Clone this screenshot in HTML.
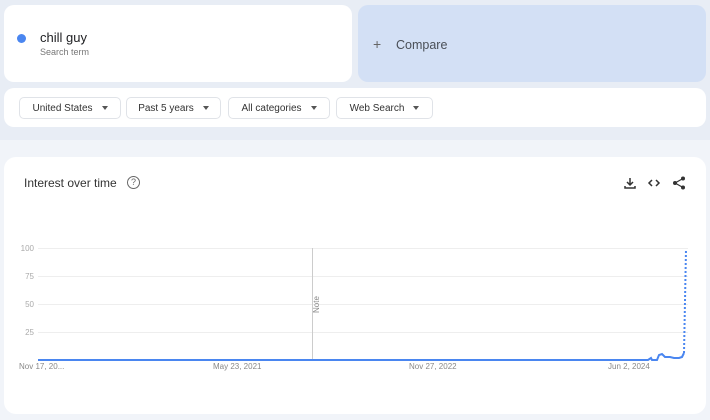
<!DOCTYPE html>
<html><head><style>
*{margin:0;padding:0;box-sizing:border-box}
body{width:710px;height:420px;background:#f1f4f9;font-family:"Liberation Sans",sans-serif;position:relative;overflow:hidden}
.top{position:absolute;left:0;top:0;width:710px;height:140px;background:#e8edf5}
.card{position:absolute;background:#fff;border-radius:10px}
.btn{position:absolute;top:97px;height:22px;border:1px solid #e0e3e8;border-radius:5px;font-size:10px;color:#333;display:flex;align-items:center;justify-content:center;background:#fff}
.btn i{display:inline-block;margin-left:9px;border-left:3.5px solid transparent;border-right:3.5px solid transparent;border-top:4px solid #555}
.yl{position:absolute;left:14px;width:20px;text-align:right;font-size:8px;color:#aaa}
.xl{position:absolute;top:362px;font-size:8px;color:#888}
</style></head><body>
<div class="top"></div>
<div class="card" style="left:4px;top:5px;width:348px;height:77px"></div>
<div style="position:absolute;left:17px;top:34px;width:9px;height:9px;border-radius:50%;background:#4a86f0"></div>
<div style="position:absolute;left:40px;top:30px;font-size:13px;color:#202124">chill guy</div>
<div style="position:absolute;left:40px;top:47px;font-size:9px;color:#777">Search term</div>
<div style="position:absolute;left:358px;top:5px;width:348px;height:77px;background:#d3e0f5;border-radius:10px"></div>
<div style="position:absolute;left:373px;top:36px;font-size:14px;color:#666">+</div>
<div style="position:absolute;left:396px;top:38px;font-size:12.5px;color:#4a4f57">Compare</div>
<div class="card" style="left:4px;top:88px;width:702px;height:39px"></div>
<div class="btn" style="left:19px;width:102px">United States<i></i></div>
<div class="btn" style="left:126px;width:95px">Past 5 years<i></i></div>
<div class="btn" style="left:228px;width:102px">All categories<i></i></div>
<div class="btn" style="left:336px;width:97px">Web Search<i></i></div>
<div class="card" style="left:4px;top:157px;width:702px;height:257px;border-radius:12px"></div>
<div style="position:absolute;left:24px;top:176px;font-size:12px;color:#333">Interest over time</div>
<div style="position:absolute;left:127px;top:176px;width:13px;height:13px;border:1.2px solid #666;border-radius:50%;font-size:9px;color:#666;text-align:center;line-height:11px">?</div>
<svg style="position:absolute;left:620px;top:175px" width="70" height="16" viewBox="0 0 70 16">
<path d="M10 3v7M7 7l3 3 3-3M5 11v2h10v-2" stroke="#333" stroke-width="1.5" fill="none"/>
<path d="M32 5l-3 3 3 3M36 5l3 3-3 3" stroke="#333" stroke-width="1.5" fill="none"/>
<circle cx="63" cy="3.5" r="2" fill="#333"/><circle cx="55" cy="8" r="2" fill="#333"/><circle cx="63" cy="12.5" r="2" fill="#333"/>
<path d="M63 3.5L55 8L63 12.5" stroke="#333" stroke-width="1.2" fill="none"/>
</svg>
<svg style="position:absolute;left:0;top:0" width="710" height="420">
<g stroke="#eee" stroke-width="1"><line x1="38" y1="248.5" x2="688" y2="248.5"/><line x1="38" y1="276.5" x2="688" y2="276.5"/><line x1="38" y1="304.5" x2="688" y2="304.5"/><line x1="38" y1="332.5" x2="688" y2="332.5"/></g>
<line x1="312.5" y1="248" x2="312.5" y2="360" stroke="#ccc"/>
<text x="319" y="313" transform="rotate(-90 319 313)" font-size="8" fill="#888" font-family="Liberation Sans">Note</text>
<path d="M38 360H648L651 358L652 360H657L659 355L662 354L665 357L670 357L674 358L679 358L682 357L684 353" stroke="#4a86f0" stroke-width="2" fill="none"/>
<path d="M684 353L686 249" stroke="#4a86f0" stroke-width="2" stroke-dasharray="2 2" fill="none"/>
</svg>
<div class="yl" style="top:244px">100</div>
<div class="yl" style="top:272px">75</div>
<div class="yl" style="top:300px">50</div>
<div class="yl" style="top:328px">25</div>
<div class="xl" style="left:19px">Nov 17, 20...</div>
<div class="xl" style="left:213px">May 23, 2021</div>
<div class="xl" style="left:409px">Nov 27, 2022</div>
<div class="xl" style="left:608px">Jun 2, 2024</div>
</body></html>
